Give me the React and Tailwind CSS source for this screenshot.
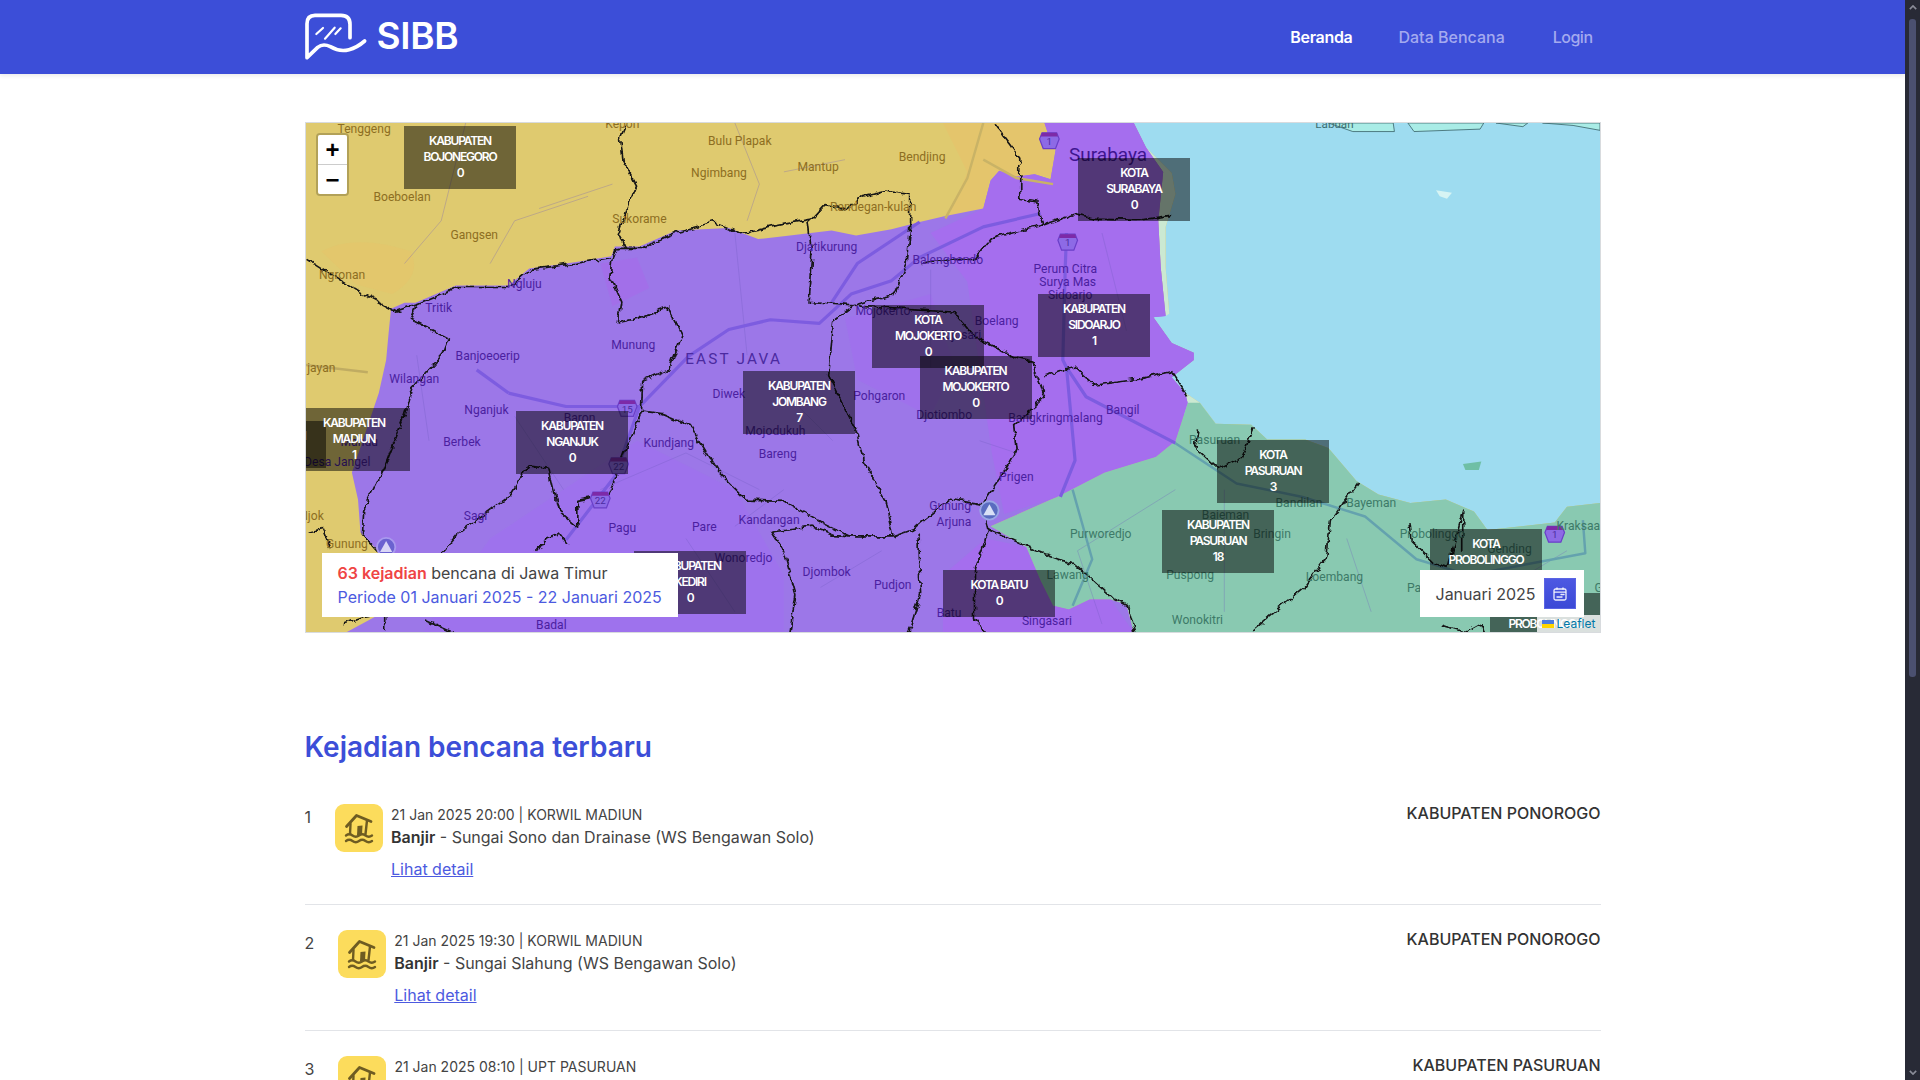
const INTER = '"Inter", "Liberation Sans", sans-serif';

const boxes = [
  { x: 214, y: 421, lines: ['KOTA MADIUN', '0'] },
  { x: 404, y: 126, lines: ['KABUPATEN', 'BOJONEGORO', '0'] },
  { x: 1078, y: 158, lines: ['KOTA', 'SURABAYA', '0'] },
  { x: 872, y: 305, lines: ['KOTA', 'MOJOKERTO', '0'] },
  { x: 1038, y: 294, lines: ['KABUPATEN', 'SIDOARJO', '1'] },
  { x: 919.5, y: 356, lines: ['KABUPATEN', 'MOJOKERTO', '0'] },
  { x: 743, y: 371, lines: ['KABUPATEN', 'JOMBANG', '7'] },
  { x: 298, y: 408, lines: ['KABUPATEN', 'MADIUN', '1'] },
  { x: 516, y: 411, lines: ['KABUPATEN', 'NGANJUK', '0'] },
  { x: 634, y: 551, lines: ['KABUPATEN', 'KEDIRI', '0'] },
  { x: 943, y: 570, lines: ['KOTA BATU', '0'] },
  { x: 1217, y: 440, lines: ['KOTA', 'PASURUAN', '3'] },
  { x: 1162, y: 510, lines: ['KABUPATEN', 'PASURUAN', '18'] },
  { x: 1430, y: 529, lines: ['KOTA', 'PROBOLINGGO', '0'] },
  { x: 1490, y: 593, lines: ['KABUPATEN', 'PROBOLINGGO', '0'] },
];

const labels = [
  ['Tenggeng', 297, 108, 'y'], ['Kepoh', 508, 104, 'y'], ['Bulu Plapak', 604, 118, 'y'], ['Bendjing', 753, 131, 'y'],
  ['Ngimbang', 587, 144, 'y'], ['Mantup', 668, 139, 'y'], ['Boeboelan', 328, 164, 'y'], ['Randegan-kulan', 713, 172, 'y'],
  ['Sukorame', 522, 182, 'y'], ['Gangsen', 387, 195, 'y'], ['Ngronan', 279, 228, 'y'], ['Ngluju', 428, 235, 'p'],
  ['Djatikurung', 675, 205, 'p'], ['Tritik', 358, 255, 'p'], ['Munung', 517, 285, 'p'], ['Banjoeoerip', 398, 294, 'p'],
  ['Balengbendo', 774, 215, 'p'], ['Perum Citra', 870, 223, 'p'], ['Surya Mas', 872, 233, 'p'], ['Sidoarjo', 874, 244, 'p'],
  ['Boelang', 814, 265, 'p'], ['Mojokerto', 721, 257, 'p'], ['Mojosari', 782, 277, 'p'], ['Wilangan', 338, 313, 'p'], ['Nganjuk', 397, 338, 'p'],
  ['Diwek', 595, 325, 'p'], ['Pohgaron', 718, 327, 'p'], ['Baron', 473, 345, 'p'], ['Mojodukuh', 633, 355, 'p'],
  ['Berbek', 377, 364, 'p'], ['Mandu', 293, 364, 'p'], ['Kundjang', 546, 365, 'p'], ['Bareng', 635, 374, 'p'],
  ['Desa Jangel', 275, 381, 'p'], ['Sagi', 388, 425, 'p'], ['Pagu', 508, 435, 'p'], ['Pare', 575, 434, 'p'],
  ['Kandangan', 628, 428, 'p'], ['Wonoredjo', 607, 459, 'p'], ['Djombok', 675, 471, 'p'], ['Pudjon', 729, 481, 'p'],
  ['Badal', 450, 514, 'p'], ['Batu', 775, 504, 'p'], ['Singasari', 855, 511, 'p'], ['Gunung', 776, 417, 'p'],
  ['Arjuna', 779, 430, 'p'], ['Prigen', 830, 393, 'p'], ['Bangil', 917, 338, 'p'], ['Bangkringmalang', 862, 345, 'p'],
  ['Djotiombo', 771, 342, 'p'], ['jayan', 262, 304, 'y'], ['Njok', 254, 425, 'y'], ['Gunung', 283, 448, 'y'],
  ['Lawang', 872, 473, 'g'], ['Purworedjo', 899, 440, 'g'], ['Bringin', 1039, 440, 'g'], ['Pasuruan', 992, 363, 'g'],
  ['Bandilan', 1061, 414, 'g'], ['Bayeman', 1120, 414, 'g'], ['Baieman', 1001, 424, 'g'], ['Puspong', 972, 473, 'g'],
  ['Loembang', 1090, 475, 'g'], ['Wonokitri', 978, 510, 'g'], ['Probolinggo', 1170, 440, 'g'], ['Kraksaan', 1292, 433, 'g'],
  ['Gending', 1233, 452, 'g'], ['Patok', 1162, 484, 'g'], ['Gading', 1318, 484, 'g'],
];
const labelFill = { y: '#8d6e22', p: '#4b1fa0', g: '#3d7a68' };

const borders = [
  '250,210 295,239 322,253 339,247 372,233 415,233 432,219 469,214 499,209 502,201 522,201 552,188 582,180 605,189 630,183 662,177 672,166 692,170 702,159 722,154 742,157',
  '510,100 505,112 507,130 518,150 510,170 503,190 510,201',
  '499,209 497,225 506,245 503,262 520,258 545,250 556,272 546,300 523,310 522,335 512,360 502,386 495,403 470,408 470,429 455,416 447,381 430,379 415,403 372,435 358,452',
  '339,247 334,259 365,275 360,288 335,316 329,337 312,381 295,416 294,435 309,451',
  '522,335 540,337 562,346 585,384 608,407 639,408 672,427 693,437 728,437 745,431 775,406 801,411 806,431 845,449 876,460 907,487 920,494 926,516',
  '679,261 675,305 699,353 704,376 722,408 728,437',
  '659,180 662,207 659,245 695,248 679,261',
  '695,248 712,243 728,240 739,215 742,185 742,157',
  '662,177 659,180',
  '751,215 775,210 795,210 808,193 850,182 876,173 892,177 928,178 955,174',
  '811,100 820,112 832,128 832,161 845,163 848,174 850,182',
  '700,248 722,250 777,253 793,272 829,291 842,294 852,324 827,346 829,365 815,390 801,411',
  '852,306 876,298 892,313 928,308 955,302 968,322',
  '978,349 975,365 993,382 1012,373 1022,349',
  '1108,393 1085,425 1082,455 1064,479 1022,514',
  '1150,425 1152,441 1170,459 1182,462 1194,416 1194,450',
  '1176,510 1196,516 1209,509 1211,517',
  '629,433 639,449 649,485 644,516',
  '629,433 645,431 662,429 680,436 693,437',
  '749,435 749,452 751,484 741,516',
  '806,431 795,463 795,504 803,516',
  '462,444 455,434 445,438 437,450',
  '250,434 262,431 268,447',
  '278,509 295,503 313,500 313,516',
  '345,505 372,517',
];

const roads = [
  '415,321 462,332 522,332 562,291 595,269 629,261 669,264 695,240 728,229 751,210 803,185 850,174',
  '389,302 415,321',
  '522,332 502,389 462,441',
  '871,300 887,324 960,362',
  '871,190 870,218 868,294 871,300 878,376 866,406',
  '751,181 700,215 679,247',
];
const greenRoads = [
  '960,362 1010,395 1064,406 1115,422 1157,457 1200,470 1295,452 1293,425',
  '876,400 892,457 876,495',
];
const thin = [
  '380,100 360,180 330,215', '600,100 620,150 610,180', '690,130 640,140', '440,170 500,150', '400,215 420,180 480,160',
  '600,190 610,290', '340,290 350,360', '420,340 460,400', '490,400 560,370 620,400', '640,320 680,360', '600,430 640,400', '560,440 600,500',
  '670,480 720,450', '760,220 760,300', '900,190 920,270', '830,370 800,360', '960,400 880,450 900,510', '1100,440 1120,500', '1000,400 1000,500',
  '1230,480 1280,450',
];

function Logo() {
  return (
    <svg viewBox="40 35 195 150" className="w-[65px] h-[50px] shrink-0 -ml-[2px]" fill="none" stroke="#fff" strokeWidth="11" strokeLinecap="round" strokeLinejoin="round">
      <path d="M181 112 V72 Q181 45 154 45 H76 Q52 45 52 70 V172 L84 141 Q100 128 122 139 Q150 156 178 148 Q202 142 225 122" />
      <path d="M80 101 L100 83 M106 115 L135 82 M137 101 L153 84" strokeWidth="6.5" />
    </svg>
  );
}

function FloodIcon() {
  return (
    <svg viewBox="0 0 48 48" className="w-12 h-12" fill="none" stroke="#6e5c22" strokeLinecap="round" strokeLinejoin="round">
      <path d="M11.5 22.5 L21.5 11.5 L36 17.5" strokeWidth="2.8" />
      <path d="M15.5 20 L15 30 M32 16.5 L30.5 30" strokeWidth="2.4" />
      <path d="M22.5 22 L27.5 21.5 L27 31 L22 31 Z" fill="#6e5c22" stroke="none" />
      <path d="M11 31.5 q3.2 -2.4 6.5 0 t6.5 0 t6.5 0 t6.5 0" strokeWidth="2.4" />
      <path d="M11 37 q3.2 -2.4 6.5 0 t6.5 0 t6.5 0 t6.5 0" strokeWidth="2.4" />
    </svg>
  );
}

function Shield({ x, y, t }) {
  return (
    <g>
      <path d={`M${x - 6} ${y - 5} H${x + 6} L${x + 8} ${y} L${x + 5} ${y + 8} H${x - 5} L${x - 8} ${y} Z`} fill="#8d6ae6" stroke="#6a3fc8" strokeWidth="1" />
      <path d={`M${x - 6} ${y - 5} H${x + 6} L${x + 7} ${y - 2} H${x - 7} Z`} fill="#7d2aa8" />
      <text x={x} y={y + 5} textAnchor="middle" fontSize="8" fill="#4b2aa0" fontFamily="Roboto, sans-serif">{t}</text>
    </g>
  );
}

function MapArt() {
  return (
    <svg viewBox="249.5 100 1057.5 416.5" preserveAspectRatio="none" className="absolute inset-0 w-full h-full">
      <defs>
        <filter id="jag" x="240" y="90" width="1080" height="440" filterUnits="userSpaceOnUse">
          <feTurbulence type="turbulence" baseFrequency="0.09" numOctaves="2" seed="4" result="n" />
          <feDisplacementMap in="SourceGraphic" in2="n" scale="5" xChannelSelector="R" yChannelSelector="G" />
        </filter>
      </defs>
      <rect x="249" y="100" width="1059" height="417" fill="#dfca6f" />
      <path d="M262 205 Q290 190 335 205 Q345 225 320 240 L290 232 Z" fill="#e4c66c" opacity="0.8" />
      <path d="M770 100 L860 100 L862 145 L845 142 L830 144 L816 139 L808 147 L803 170 L775 176 L790 140 Z" fill="#e4c56c" />
      {/* water */}
      <path d="M926 100 H1307 V411 L1280 414 L1270 427 L1215 433 L1204 418 L1181 408 L1152 411 L1126 404 L1108 393 L1085 366 L1066 359 L1035 359 L1022 347 L993 346 L980 329 L968 321 L957 308 L975 294 L975 288 L957 280 L942 259 L955 256 L952 218 L952 185 L960 158 L957 141 L936 120 Z" fill="#9edcf0" />
      {/* coast strip */}
      <path d="M936 120 L957 141 L960 158 L952 185 L952 218 L955 256 L952 258 L948 218 L946 180 L950 140 Z" fill="#cbe9d2" />
      <path d="M957 308 L968 321 L980 329 L993 346 L985 350 L968 340 L955 320 Z" fill="#cbe9d2" />
      {/* north shore */}
      <path d="M1085 100 L1105 107 L1139 107 L1138 100 Z M1150 100 L1155 107 L1209 105 L1212 100 Z M1222 100 L1244 103 L1248 100 Z M1260 100 L1285 102 L1307 106 V100 Z" fill="#a9ece6" stroke="#3f6a70" strokeWidth="0.7" />
      <path d="M1173 155 L1186 157 L1182 162 L1176 160 Z" fill="#d6f4f4" />
      <path d="M1195 379 L1210 377 L1208 384 L1197 384 Z" fill="#6fbfa5" />
      {/* green */}
      <path d="M970 329 L980 329 L993 346 L1022 347 L1035 359 L1066 359 L1085 366 L1108 393 L1126 404 L1152 411 L1181 408 L1204 418 L1215 433 L1270 427 L1280 414 L1307 411 V517 H926 L920 494 L907 490 L890 490 L873 498 L860 495 L850 475 L838 447 L809 430 L863 406 L902 386 L944 373 L960 360 Z" fill="#89c9b1" />
      {/* purple */}
      <path d="M319 252 L330 247 L339 247 L372 233 L415 233 L432 219 L469 214 L499 209 L502 201 L522 201 L552 188 L595 186 L619 195 L645 192 L679 188 L699 192 L728 187 L751 181 L772 176 L803 170 L809 147 L816 139 L830 144 L845 142 L858 146 L863 117 L856 109 L853 100 H926 L936 120 L950 140 L946 180 L948 218 L952 258 L942 259 L957 280 L975 288 L975 294 L957 308 L968 321 L970 329 L960 360 L944 373 L902 386 L863 406 L809 430 L838 447 L850 475 L860 495 L873 498 L890 490 L907 490 L920 494 L926 517 H282 L306 504 L309 451 L294 435 L292 408 L287 386 L309 321 L315 294 L317 272 Z" fill="#9c77e8" />
      <path d="M760 190 L803 170 L809 147 L816 139 L830 144 L845 142 L858 146 L863 117 L856 109 L853 100 H926 L936 120 L950 140 L946 180 L948 218 L952 258 L942 259 L957 280 L975 288 L975 294 L957 308 L968 321 L970 329 L960 360 L944 373 L902 386 L863 406 L820 420 L810 370 L800 300 L790 230 Z" fill="#a56eee" />
      <path d="M345 517 L400 440 L520 360 L600 400 L640 470 L640 517 Z" fill="#a06ff0" opacity="0.6" />
      <path d="M770 470 L805 440 L838 447 L850 475 L860 495 L873 498 L890 490 L907 490 L926 517 H770 Z" fill="#a56eee" />
      <path d="M690 260 L760 240 L780 300 L760 340 L700 310 Z" fill="#a16eee" opacity="0.6" />
      <path d="M490 215 L520 210 L530 235 L500 250 Z" fill="#a56cea" opacity="0.7" />
      {thin.map((p, i) => <polyline key={i} points={p} fill="none" stroke="#6f5ac0" strokeOpacity="0.35" strokeWidth="0.7" />)}
      <polyline points="249,298 300,304" fill="none" stroke="#c0ac62" strokeWidth="2" />
      <polyline points="803,100 790,145 772,178" fill="none" stroke="#c9b366" strokeWidth="2" />
      <polyline points="803,130 830,145 860,150" fill="none" stroke="#c9b366" strokeWidth="2" />
      {roads.map((p, i) => <polyline key={i} points={p} fill="none" stroke="#7d5ce0" strokeWidth="2.6" strokeLinejoin="round" />)}
      {greenRoads.map((p, i) => <polyline key={i} points={p} fill="none" stroke="#64a2ae" strokeWidth="2" strokeLinejoin="round" />)}
      <g filter="url(#jag)">
        {borders.map((p, i) => <polyline key={i} points={p} fill="none" stroke="#141414" strokeWidth="1.35" strokeLinejoin="round" />)}
      </g>
      <Shield x={512} y={332} t="15" />
      <Shield x={505} y={379} t="22" />
      <Shield x={490} y={407} t="22" />
      <Shield x={872} y={196} t="1" />
      <Shield x={857} y={113} t="1" />
      <Shield x={1270} y={435} t="1" />
      <circle cx="315" cy="447" r="7.5" fill="#6b62d0" stroke="#a999ee" strokeWidth="1.5" />
      <path d="M315 442 L320 451 H310 Z" fill="#d9d6f6" />
      <circle cx="808" cy="417" r="7.5" fill="#5a6cc0" stroke="#9aa6e6" strokeWidth="1.5" />
      <path d="M808 412 L813 421 H803 Z" fill="#d9e0f6" />
      <text x="905" y="131" textAnchor="middle" fontSize="15.5" fill="#3f1590" fontFamily="Roboto, sans-serif">Surabaya</text>
      <text x="599" y="297" textAnchor="middle" fontSize="12.5" letterSpacing="1.8" fill="#4b2aa0" fontFamily="Roboto, sans-serif">EAST JAVA</text>
      <text x="1090" y="104" textAnchor="middle" fontSize="9.5" fill="#3d6e70" fontFamily="Roboto, sans-serif">Labuan</text>
      {labels.map(([t, x, y, k], i) => (
        <text key={i} x={x} y={y} textAnchor="middle" fontSize="9.9" fill={labelFill[k]} fontFamily="Roboto, sans-serif">{t}</text>
      ))}
    </svg>
  );
}

function Row({ n, date, place, title, desc, region, last }) {
  return (
    <div className={`flex items-start pt-[25px] pb-[23px] ${last ? '' : 'border-b border-[#e2e4e8]'}`}>
      <div className="text-base leading-6 text-[#444] mr-[24px] mt-[1px]">{n}</div>
      <div className="w-12 h-12 rounded-[9px] bg-[#fcdc5c] shrink-0 mr-2"><FloodIcon /></div>
      <div className="flex-1 min-w-0 -mt-[1px]">
        <div className="text-sm leading-[24px] text-[#444]">{date} | {place}</div>
        <div className="text-base leading-[21px] text-[#444]"><span className="font-semibold text-[#333]">{title}</span> - {desc}</div>
        <a href="#" className="block mt-[9px] text-base leading-6 text-[#4c5ae0] underline">Lihat detail</a>
      </div>
      <div className="text-base font-medium text-[#333] leading-6 -mt-[3px]">{region}</div>
    </div>
  );
}

export default function App() {
  return (
    <div className="flex h-screen overflow-hidden bg-white" style={{ fontFamily: INTER }}>
      <main className="flex-1 min-w-0 overflow-hidden">
        <header className="h-[74px] bg-[#3c4ed8] shadow-[0_2px_4px_rgba(0,0,0,0.08)]">
          <div className="max-w-[1320px] mx-auto px-3 h-full flex items-center justify-between">
            <div className="flex items-center gap-[9px]">
              <Logo />
              <span className="text-white text-[37px] leading-none font-semibold -mt-[4px] tracking-[-0.3px]">SIBB</span>
            </div>
            <nav className="flex items-center pr-2 text-base font-medium">
              <a className="text-white font-semibold tracking-[-0.3px] mr-[46px]">Beranda</a>
              <a className="text-[#a4aaef] mr-12">Data Bencana</a>
              <a className="text-[#a4aaef] tracking-[-0.5px]">Login</a>
            </nav>
          </div>
        </header>

        <div className="max-w-[1320px] mx-auto px-3">
          <section className="relative mt-12 h-[511px] border border-[#d8dbde] overflow-hidden bg-[#9edcf0]">
            <MapArt />
            {boxes.map((b, i) => (
              <div
                key={i}
                className="absolute w-[112px] pt-[7px] pb-[8px] bg-black/50 text-white text-center text-xs leading-4 font-semibold tracking-[-1.2px]"
                style={{ left: b.x - 305.5, top: b.y - 123 }}
              >
                {b.lines.map((l, j) => <div key={j} className="whitespace-nowrap">{l}</div>)}
              </div>
            ))}

            <div className="absolute left-[10.5px] top-[10px] w-[33px] rounded-[4px] border-2 border-black/20 bg-clip-padding">
              <div className="h-[30px] bg-white rounded-t-[2px] border-b border-[#ccc] flex items-center justify-center text-[24px] font-bold text-black" style={{ fontFamily: '"Liberation Sans", sans-serif' }}>+</div>
              <div className="h-[29px] bg-white rounded-b-[2px] flex items-center justify-center text-[24px] font-bold text-black" style={{ fontFamily: '"Liberation Sans", sans-serif' }}>−</div>
            </div>

            <div className="absolute left-[16px] bottom-[15px] bg-white px-4 py-2 text-base leading-6 whitespace-nowrap">
              <div className="text-[#444]"><span className="text-[#ef4444] font-semibold">63 kejadian</span> bencana di Jawa Timur</div>
              <div className="text-[#4c5ae0]">Periode 01 Januari 2025 - 22 Januari 2025</div>
            </div>

            <div className="absolute right-0 bottom-0 z-[1] h-[17px] w-[63px] bg-white/80 flex items-center pl-[5px] text-xs leading-none text-[#0078a8] whitespace-nowrap">
              <svg viewBox="0 0 12 8" className="w-3 h-2 mr-[3px] shrink-0"><rect width="12" height="4" fill="#4c7be1" /><rect y="4" width="12" height="4" fill="#ffd500" /></svg>
              Leaflet
            </div>

            <div className="absolute right-[16px] bottom-[15px] z-[2] h-[47px] bg-white pl-4 pr-2 flex items-center gap-[8px]">
              <span className="text-base text-[#444] whitespace-nowrap">Januari 2025</span>
              <button className="w-8 h-[31px] bg-linear-to-b from-[#4d58e2] to-[#3b49d6] border border-[#5a64e4] flex items-center justify-center">
                <svg viewBox="0 0 16 16" className="w-4 h-4" fill="none" stroke="#fff" strokeWidth="1.3" strokeLinecap="round" strokeOpacity="0.9">
                  <rect x="2" y="3" width="12" height="11" rx="1.5" />
                  <path d="M2.5 6.2 H13.5 M5 1.8 V3 M11 1.8 V3" />
                  <path d="M9 8.5 H10.4 M11.4 8.5 H12 M5 11 H7.5 M8.5 11 H10" strokeWidth="1.4" />
                </svg>
              </button>
            </div>
          </section>

          <h1 className="mt-[97px] text-[28px] leading-[34px] font-semibold text-[#3c4ed8]">Kejadian bencana terbaru</h1>

          <div className="mt-[15px]">
            <Row n="1" date="21 Jan 2025 20:00" place="KORWIL MADIUN" title="Banjir" desc="Sungai Sono dan Drainase (WS Bengawan Solo)" region="KABUPATEN PONOROGO" />
            <Row n="2" date="21 Jan 2025 19:30" place="KORWIL MADIUN" title="Banjir" desc="Sungai Slahung (WS Bengawan Solo)" region="KABUPATEN PONOROGO" />
            <Row n="3" date="21 Jan 2025 08:10" place="UPT PASURUAN" title="Banjir" desc="Sungai Welang (WS Welang Rejoso)" region="KABUPATEN PASURUAN" last />
          </div>
        </div>
      </main>

      <aside className="w-[15px] shrink-0 h-screen bg-[#282a36] flex flex-col items-center justify-between">
        <svg viewBox="0 0 10 6" className="w-[8px] h-[5px] mt-[5px] shrink-0" fill="none" stroke="#8a8c98" strokeWidth="2"><path d="M1 5 L5 1 L9 5" /></svg>
        <div className="flex-1 w-full pt-[9px]">
          <div className="w-[7px] h-[658px] mx-auto rounded-b-[3px] rounded-t-[3px] bg-[#4b5070]" />
        </div>
        <svg viewBox="0 0 10 6" className="w-[8px] h-[5px] mb-[5px] shrink-0" fill="none" stroke="#8a8c98" strokeWidth="2"><path d="M1 1 L5 5 L9 1" /></svg>
      </aside>
    </div>
  );
}
